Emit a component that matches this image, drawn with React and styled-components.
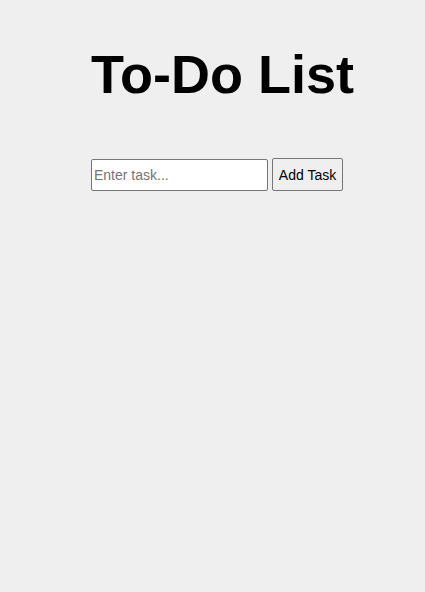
import React, { useState } from "react";
import styled, { createGlobalStyle } from "styled-components";

const GlobalStyle = createGlobalStyle`
  html, body {
    margin: 0;
    padding: 0;
    background-color: #efefef;
    font-family: "Liberation Sans", Arial, sans-serif;
  }
`;

export default function App() {
  const [task, setTask] = useState("");
  const [tasks, setTasks] = useState([]);

  const onAdd = () => {
    const value = task.trim();
    if (!value) return;
    setTasks([...tasks, value]);
    setTask("");
  };

  return (
    <>
      <GlobalStyle />
      <Page>
        <Title>To-Do List</Title>
        <Form>
          <TaskInput
            type="text"
            placeholder="Enter task..."
            value={task}
            onChange={(e) => setTask(e.target.value)}
            onKeyDown={(e) => e.key === "Enter" && onAdd()}
          />
          <AddButton onClick={onAdd}>Add Task</AddButton>
        </Form>
        <TaskList>
          {tasks.map((t, i) => (
            <li key={i}>{t}</li>
          ))}
        </TaskList>
      </Page>
    </>
  );
}

const Page = styled.div`
  min-height: 592px;
  display: flex;
  flex-direction: column;
  align-items: center;
  padding-top: 47px;
  box-sizing: border-box;
`;

const Title = styled.h1`
  margin: 0 0 57px 20px;
  font-size: 54px;
  line-height: 54px;
  font-weight: 700;
  color: #000;
`;

const Form = styled.div`
  display: flex;
  align-items: flex-end;
  gap: 4px;
  margin-left: 9px;
`;

const TaskInput = styled.input`
  width: 177px;
  height: 32px;
  box-sizing: border-box;
  padding: 0 2px;
  border: 1px solid #767676;
  border-radius: 2px;
  background: #fff;
  font-family: "Liberation Sans", Arial, sans-serif;
  font-size: 14px;
  color: #000;
  outline: none;

  &::placeholder {
    color: #757575;
  }
`;

const AddButton = styled.button`
  width: 71px;
  height: 33px;
  box-sizing: border-box;
  padding: 0;
  border: 1px solid #767676;
  border-radius: 2px;
  background: #efefef;
  font-family: "Liberation Sans", Arial, sans-serif;
  font-size: 14px;
  color: #000;
  cursor: pointer;
`;

const TaskList = styled.ul`
  list-style: none;
  padding: 0;
  margin: 16px 0 0;
`;
